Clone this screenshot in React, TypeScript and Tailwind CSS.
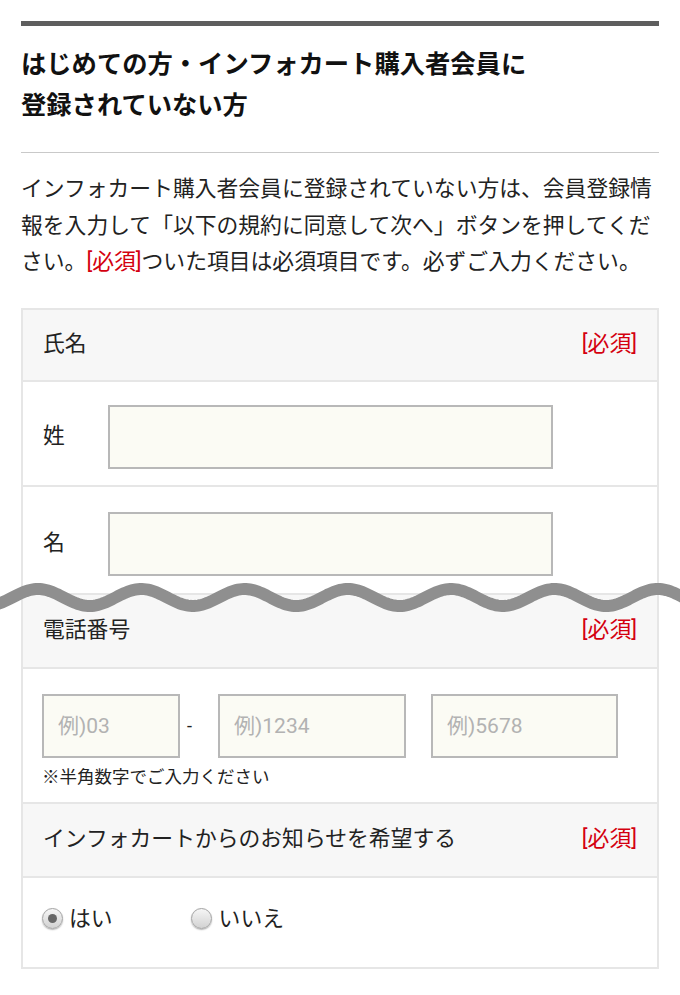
import React from "react";

function Radio({ checked }: { checked?: boolean }) {
  return (
    <span className="relative flex h-[21px] w-[21px] items-center justify-center rounded-full border border-[#a3a3a3] bg-linear-to-b from-[#f6f6f6] to-[#d2d2d2] shadow-[0_1px_1.5px_rgba(0,0,0,0.3)]">
      {checked && <span className="h-[9px] w-[9px] rounded-full bg-[#676767]" />}
    </span>
  );
}

function Required() {
  return <span className="text-[#d4000f]">[必須]</span>;
}

function Header({ label, h }: { label: string; h: string }) {
  return (
    <div className={`flex items-center justify-between border-b-2 border-[#e6e6e6] bg-[#f7f7f7] px-[20px] ${h}`}>
      <span>{label}</span>
      <Required />
    </div>
  );
}

const inputCls =
  "h-[64px] border-2 border-[#b8b8b8] bg-[#fbfbf4] px-[14px] text-[21px] text-[#222] outline-none placeholder:text-[#b2b2b2]";

function Wave() {
  const pts: string[] = [];
  for (let x = -8; x <= 690; x += 2) {
    const y = 22.5 - 8.5 * Math.cos((2 * Math.PI * (x - 38)) / 103.3);
    pts.push(`${x},${y.toFixed(2)}`);
  }
  return (
    <svg
      className="pointer-events-none absolute left-0 top-[575px]"
      width="680"
      height="45"
      viewBox="0 0 680 45"
    >
      <polyline points={pts.join(" ")} fill="none" stroke="#8f8f8f" strokeWidth="12" />
    </svg>
  );
}

export default function App() {
  return (
    <div className="relative w-[680px] bg-white font-['Roboto','Noto_Sans_CJK_JP',sans-serif] text-[21.8px] text-[#222]">
      <div className="px-[21px] pt-[21px] pb-[27px]">
        <div className="h-[5px] bg-[#5e5e5e]" />
        <h1 className="mt-[18px] text-[25.3px] font-bold leading-[41px] text-[#111]">
          はじめての方・インフォカート購入者会員に
          <br />
          登録されていない方
        </h1>
        <div className="mt-[26px] h-px bg-[#c9c9c9]" />
        <p className="mt-[18px] leading-[36.5px]">
          インフォカート購入者会員に登録されていない方は、会員登録情
          <br />
          報を入力して「以下の規約に同意して次へ」ボタンを押してくだ
          <br />
          さい。<Required />ついた項目は必須項目です。必ずご入力ください。
        </p>

        <div className="mt-[27px] border-2 border-b-0 border-[#e6e6e6]">
          <Header label="氏名" h="h-[72px]" />
          <div className="flex items-center border-b-2 border-[#e6e6e6] pl-[20px] pt-[23px] pb-[16px]">
            <span className="w-[65px]">姓</span>
            <input readOnly className={`${inputCls} w-[445px]`} />
          </div>
          <div className="flex items-center border-b-2 border-[#e6e6e6] pl-[20px] pt-[25px] pb-[17px]">
            <span className="w-[65px]">名</span>
            <input readOnly className={`${inputCls} w-[445px]`} />
          </div>

          <Header label="電話番号" h="h-[74px]" />
          <div className="border-b-2 border-[#e6e6e6] pl-[19px] pt-[25px] pb-[12px]">
            <div className="flex items-center">
              <input readOnly placeholder="例)03" className={`${inputCls} w-[138px]`} />
              <span className="ml-[7px] w-[7px] text-[18px]">-</span>
              <input readOnly placeholder="例)1234" className={`${inputCls} ml-[24px] w-[188px]`} />
              <input readOnly placeholder="例)5678" className={`${inputCls} ml-[25px] w-[187px]`} />
            </div>
            <div className="mt-[6px] text-[17.5px] leading-[26px]">※半角数字でご入力ください</div>
          </div>

          <Header label="インフォカートからのお知らせを希望する" h="h-[74px]" />
          <div className="flex h-[91px] items-start border-b-2 border-[#e6e6e6] pl-[19px] pt-[27px]">
            <div className="flex h-[28px] items-center">
              <Radio checked />
              <span className="ml-[6px] leading-[28px]">はい</span>
              <span className="ml-[78px]">
                <Radio />
              </span>
              <span className="ml-[7px] leading-[28px]">いいえ</span>
            </div>
          </div>
        </div>
      </div>
      <Wave />
    </div>
  );
}
